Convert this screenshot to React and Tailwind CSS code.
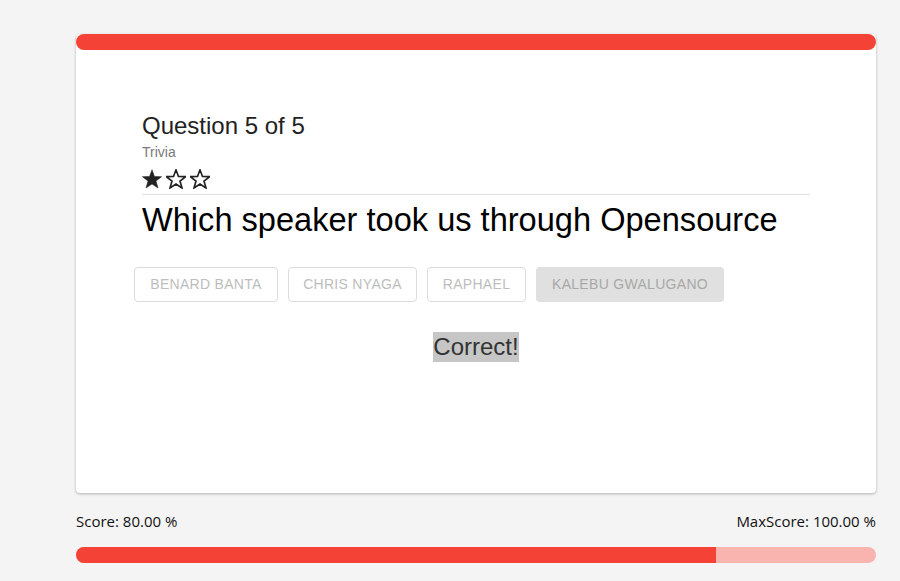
import React from "react";

function Star({ filled }) {
  return (
    <svg width="20" height="20" viewBox="1 1.2 22 21.6" className="block">
      <polygon
        points="12,1.8 14.7,9.2 22.6,9.4 16.4,14.3 18.6,21.9 12,17.5 5.4,21.9 7.6,14.3 1.4,9.4 9.3,9.2"
        fill={filled ? "#222222" : "none"}
        stroke="#222222"
        strokeWidth={filled ? 0.6 : 1.8}
        strokeLinejoin="miter"
      />
    </svg>
  );
}

export default function App() {
  const answers = [
    { label: "BENARD BANTA", selected: false, w: "w-[144px]" },
    { label: "CHRIS NYAGA", selected: false, w: "w-[129px]" },
    { label: "RAPHAEL", selected: false, w: "w-[99px]" },
    { label: "KALEBU GWALUGANO", selected: true, w: "w-[188px]" },
  ];
  return (
    <div className="min-h-[581px] w-full bg-[#f4f4f4] pt-[34px]" style={{ fontFamily: '"Liberation Sans", Arial, sans-serif' }}>
      <div className="ml-[76px] w-[800px]">
        <div className="rounded-[4px] bg-white shadow-[0_1px_3px_rgba(0,0,0,0.28)]">
          <div className="h-[16px] w-full rounded-[8px] bg-[#f44336]" />
          <div className="px-[58px] pt-[62px] pb-[131px]">
            <div className="px-[8px]">
              <div className="text-[24px] leading-[28px] text-[#222]">Question 5 of 5</div>
              <div className="mt-[4px] text-[14px] leading-[16px] text-[#7a7a7a]">Trivia</div>
              <div className="mt-[9px] flex h-[20px] gap-[4px]">
                <Star filled />
                <Star />
                <Star />
              </div>
              <div className="mt-[5px] h-px w-full bg-[#e0e0e0]" />
              <div className="mt-[6px] text-[32.6px] leading-[38px] text-black">
                Which speaker took us through Opensource
              </div>
            </div>
            <div className="mt-[28px] flex gap-[10px]">
              {answers.map((a) => (
                <div
                  key={a.label}
                  className={
                    (a.selected
                      ? "bg-[#e0e0e0] text-[#a8a8a8] "
                      : "border border-[#dcdcdc] text-[#bdbdbd] ") +
                    a.w +
                    " flex h-[35px] items-center justify-center whitespace-nowrap rounded-[4px] text-[14px] tracking-[0.3px]"
                  }
                >
                  {a.label}
                </div>
              ))}
            </div>
            <div className="mt-[30px] flex justify-center">
              <span className="bg-[#c6c6c6] text-[24px] leading-[30px] text-[#333]">Correct!</span>
            </div>
          </div>
        </div>
        <div
          className="mt-[18px] flex justify-between text-[15px] leading-[20px] text-[#111]"
          style={{ fontFamily: '"Open Sans", "Noto Sans", sans-serif' }}
        >
          <span>Score: 80.00 %</span>
          <span>MaxScore: 100.00 %</span>
        </div>
        <div className="mt-[16px] flex h-[16px] w-full overflow-hidden rounded-[8px] bg-[#f9b4af]">
          <div className="h-full bg-[#f44336]" style={{ width: "80%" }} />
        </div>
      </div>
    </div>
  );
}
